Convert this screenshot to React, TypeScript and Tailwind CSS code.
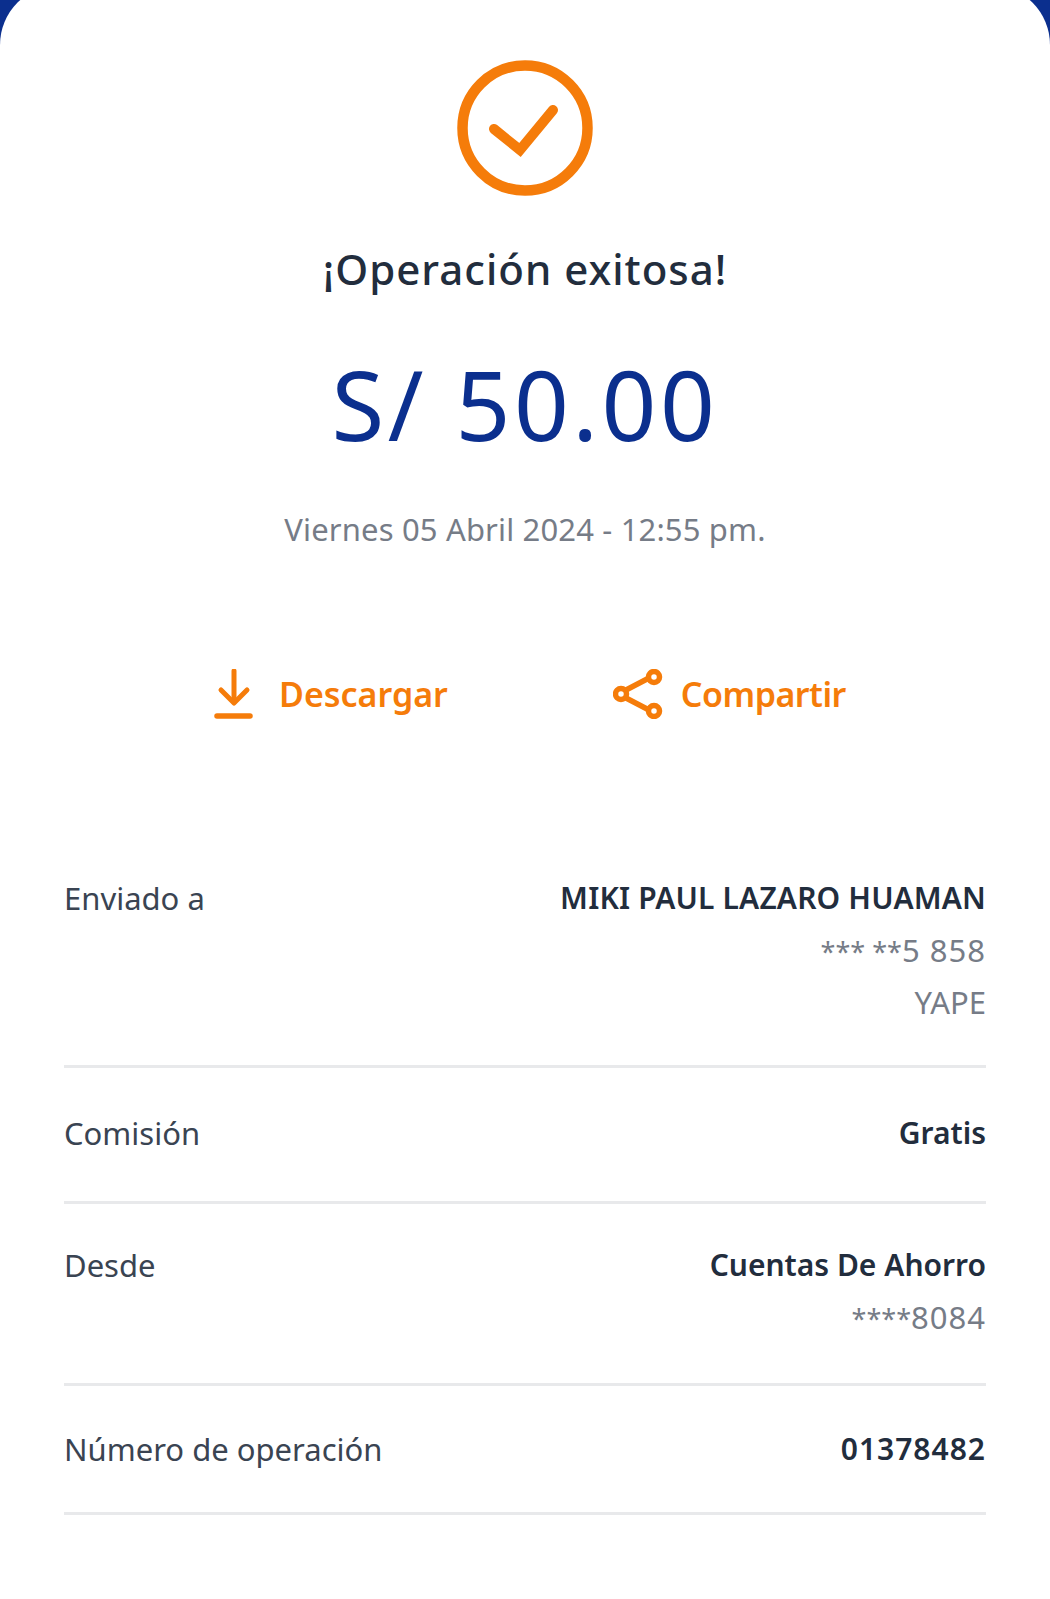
import type { ReactNode } from "react";

const FONT = "font-['Noto_Sans',sans-serif]";

function DownloadIcon() {
  return (
    <svg viewBox="0 0 40 50" className="h-[50px] w-[40px]" fill="none" stroke="#F57C0A" strokeLinecap="round" strokeLinejoin="round">
      <path d="M20 2 V33" strokeWidth="5" />
      <path d="M7 21 L20 34 L33 21" strokeWidth="5" />
      <path d="M3 47 H36" strokeWidth="5.5" />
    </svg>
  );
}

function ShareIcon() {
  return (
    <svg viewBox="0 0 50 50" className="h-[50px] w-[50px]" fill="none" stroke="#F57C0A" strokeWidth="5.5">
      <path d="M13 21 L36 9 M13 29 L36 41" />
      <circle cx="8" cy="25" r="5.5" />
      <circle cx="41" cy="8" r="5.5" />
      <circle cx="41" cy="42" r="5.5" />
    </svg>
  );
}

function Masked({ stars, digits }: { stars: string; digits: string }) {
  return (
    <>
      <span className="text-[27px] leading-none">{stars}</span>
      <span className="tracking-[1px]">{digits}</span>
    </>
  );
}

function Row({
  label,
  value,
  subs = [],
  className = "",
  valueClass = "",
}: {
  label: string;
  value: string;
  subs?: ReactNode[];
  className?: string;
  valueClass?: string;
}) {
  return (
    <div className={`flex items-start justify-between border-b-[3px] border-[#e8e9eb] ${className}`}>
      <span className="text-[31px] leading-[52px] text-[#3a4452]">{label}</span>
      <div className="text-right leading-[52px]">
        <div className={`text-[30px] font-semibold text-[#222d3d] ${valueClass}`}>{value}</div>
        {subs.map((s, i) => (
          <div key={i} className="text-[31px] text-[#767c87]">{s}</div>
        ))}
      </div>
    </div>
  );
}

export default function App() {
  return (
    <div className={`h-[1599px] w-[1050px] overflow-hidden bg-[#0b2f8e] ${FONT}`}>
      <div className="-mt-[15px] flex h-[1614px] flex-col items-center rounded-t-[60px] bg-white px-[64px] pt-[74px]">
        <svg viewBox="0 0 138 138" className="h-[138px] w-[138px]" fill="none" stroke="#F57C0A">
          <circle cx="69" cy="69" r="62.5" strokeWidth="10.5" />
          <path d="M38 70 L64 91 L97 51" strokeWidth="10" strokeLinecap="round" strokeLinejoin="miter" />
        </svg>
        <h1 className="mt-[44px] text-[42px] leading-[56px] font-medium tracking-[1px] text-[#222d3d]">¡Operación exitosa!</h1>
        <div className="mt-[47px] text-[96px] leading-[120px] tracking-[3.5px] text-[#0b2f8e]">S/ 50.00</div>
        <div className="mt-[43px] text-[31px] leading-[44px] tracking-[0.15px] text-[#767c87]">Viernes 05 Abril 2024 - 12:55 pm.</div>

        <div className="mt-[118px] flex w-full items-center pl-[150px]">
          <div className="flex items-center gap-[25px]">
            <DownloadIcon />
            <span className="text-[34px] leading-[50px] font-semibold text-[#F57C0A]">Descargar</span>
          </div>
          <div className="ml-[165px] flex items-center gap-[18px]">
            <ShareIcon />
            <span className="text-[34px] leading-[50px] font-semibold tracking-[-0.5px] text-[#F57C0A]">Compartir</span>
          </div>
        </div>

        <div className="mt-[153px] flex w-full flex-col">
          <Row
            className="h-[196px]"
            label="Enviado a"
            value="MIKI PAUL LAZARO HUAMAN"
            valueClass="tracking-[0.15px]"
            subs={[<Masked stars="*** **" digits="5 858" />, "YAPE"]}
          />
          <Row className="h-[136px] pt-[39px]" label="Comisión" value="Gratis" />
          <Row className="h-[182px] pt-[35px]" label="Desde" value="Cuentas De Ahorro" subs={[<Masked stars="****" digits="8084" />]} />
          <Row className="h-[129px] pt-[37px]" label="Número de operación" value="01378482" valueClass="tracking-[1px]" />
        </div>
      </div>
    </div>
  );
}
